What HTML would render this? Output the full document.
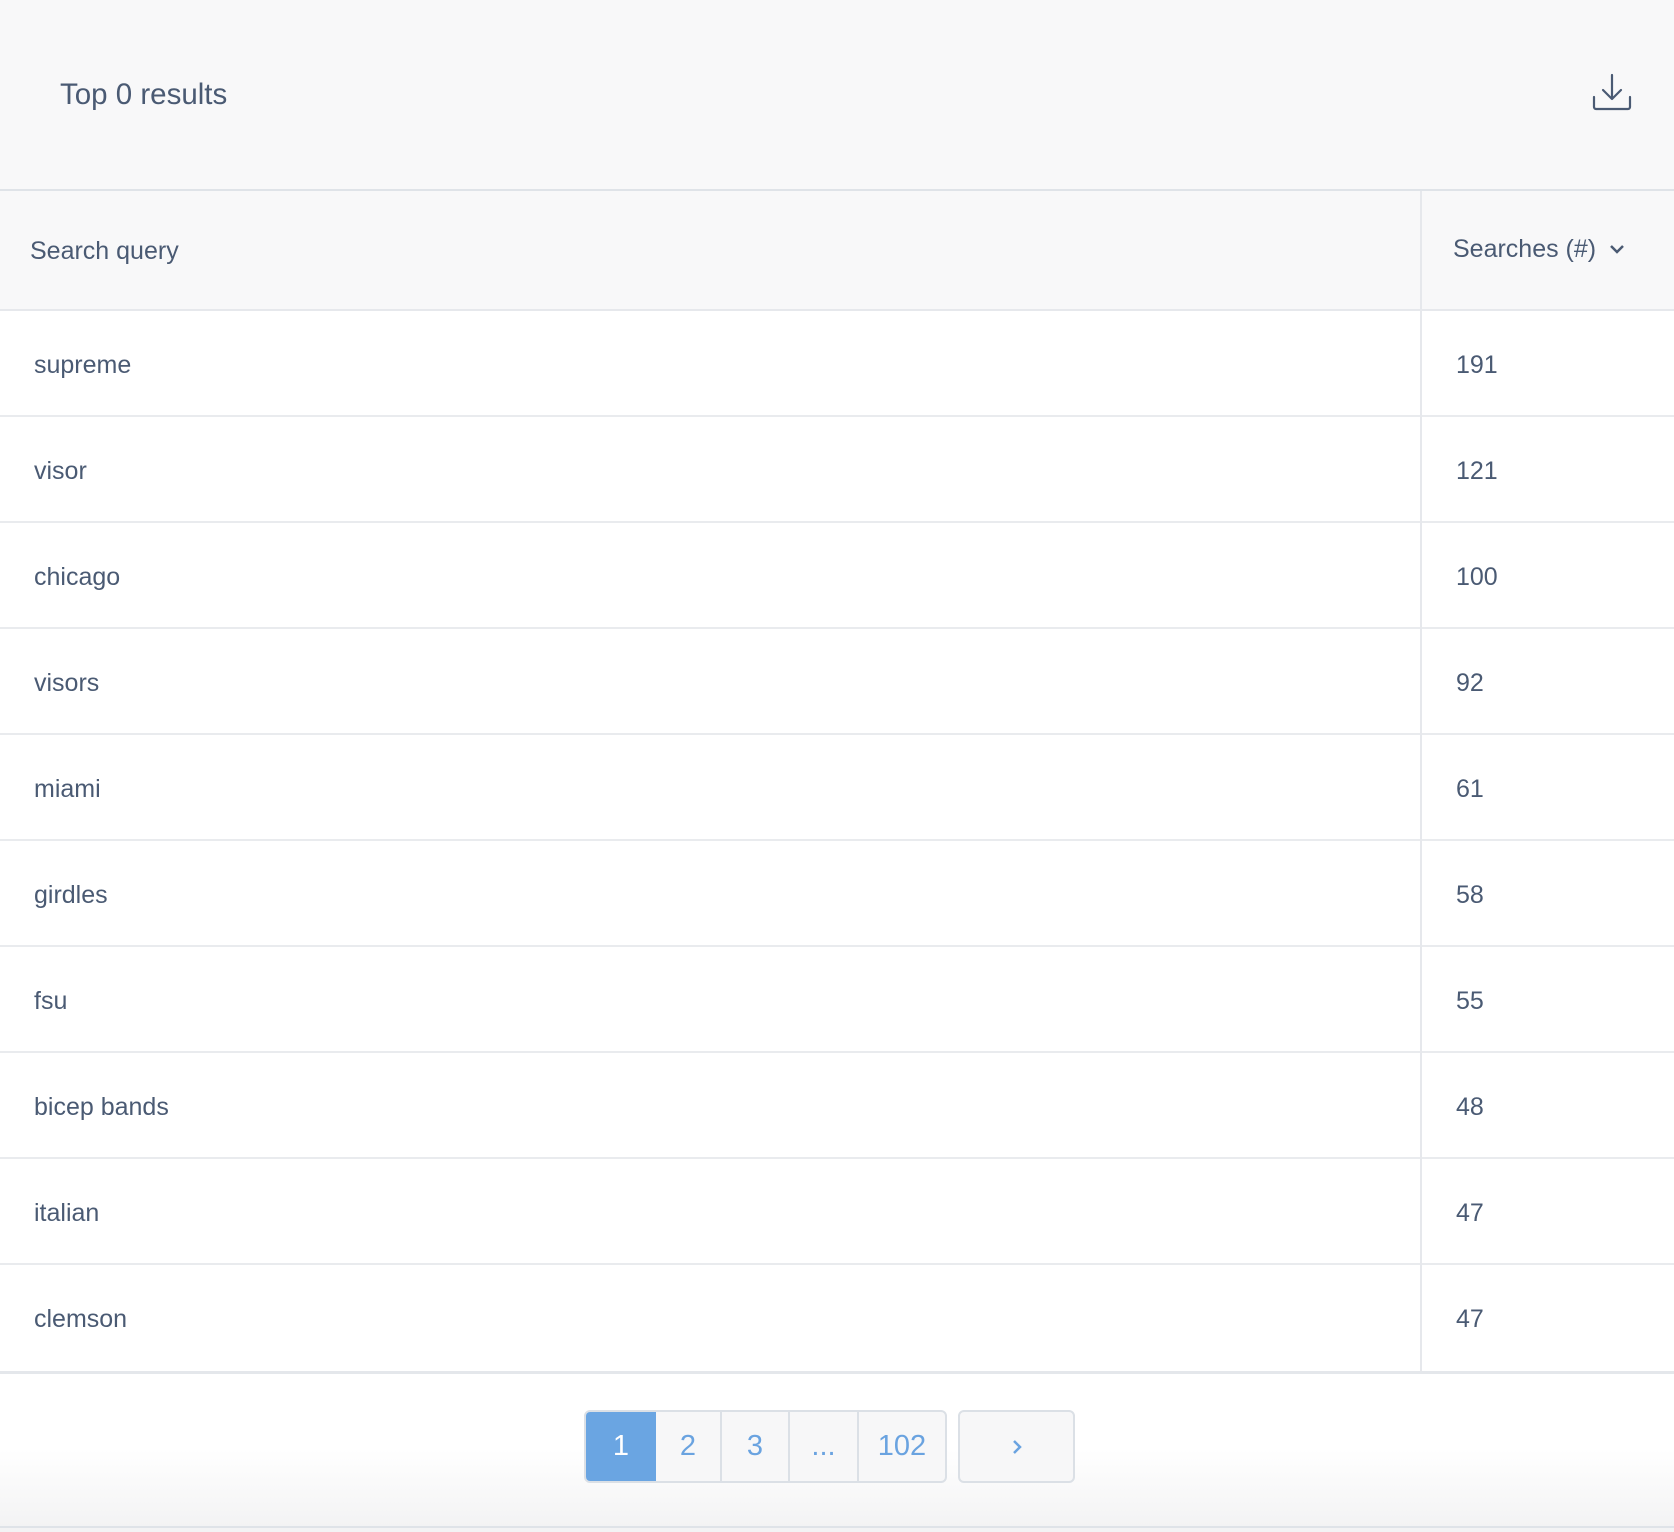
<!DOCTYPE html>
<html><head><meta charset="utf-8"><style>
*{box-sizing:border-box;margin:0;padding:0}
body{width:1674px;height:1532px;background:#f3f3f4;font-family:"Liberation Sans",sans-serif;color:#4a5a73;position:relative;overflow:hidden}
.hdr{position:absolute;left:0;top:0;width:1674px;height:191px;background:#f8f8f9;border-bottom:2px solid #dfe3e8}
.title{position:absolute;left:60px;top:78px;font-size:29.5px}
.dl{position:absolute;left:1592px;top:73px}
.th{position:absolute;left:0;top:191px;width:1674px;height:120px;background:#f8f8f9;border-bottom:2px solid #e6e8ec}
.th .a{position:absolute;left:30px;top:46px;font-size:25px}
.th .b{position:absolute;left:1453px;top:44px;font-size:25px}
.vl{position:absolute;left:1420px;top:191px;width:2px;height:1180px;background:#e6e8ec}
.row{position:absolute;left:0;width:1674px;height:106px;background:#fff;border-bottom:2px solid #e9ebee}
.row .a{position:absolute;left:34px;top:40px;font-size:25px}
.row .b{position:absolute;left:1456px;top:40px;font-size:25px}
.pg{position:absolute;left:0;top:1371px;width:1674px;height:157px;border-top:3px solid #e4e7eb;background:linear-gradient(#fff 0%,#fff 50%,#f3f3f4 100%);border-bottom:2px solid #dfe3e8}
.btns{position:absolute;left:584px;top:1410px;height:73px;display:flex;border:2px solid #dbe0e6;border-radius:6px;overflow:hidden;background:#f7f7f8}
.btns div{height:69px;line-height:69px;text-align:center;font-size:29px;color:#6aa3e0;border-right:2px solid #dbe0e6}
.btns div:last-child{border-right:none}
.btns .on{background:#6aa5e2;color:#fff;border-right:none}
.nx{position:absolute;left:958px;top:1410px;width:117px;height:73px;border:2px solid #dbe0e6;border-radius:6px;background:#f7f7f8}
</style></head><body>
<div class="hdr"><div class="title">Top 0 results</div>
<svg class="dl" width="40" height="40" viewBox="0 0 40 40" fill="none" stroke="#4a5a73" stroke-width="2.2" stroke-linecap="round" stroke-linejoin="round"><path d="M20 2V25M11 17l9 9 9-9"/><path d="M2 24v10a2 2 0 0 0 2 2h32a2 2 0 0 0 2-2V24"/></svg>
</div>
<div class="th"><div class="a">Search query</div><div class="b">Searches (#)</div>
<svg style="position:absolute;left:1609px;top:52px" width="16" height="12" viewBox="0 0 16 12" fill="none" stroke="#4a5a73" stroke-width="2.5"><path d="M2 3l6 6 6-6"/></svg></div>
<div class="row" style="top:311px"><div class="a">supreme</div><div class="b">191</div></div>
<div class="row" style="top:417px"><div class="a">visor</div><div class="b">121</div></div>
<div class="row" style="top:523px"><div class="a">chicago</div><div class="b">100</div></div>
<div class="row" style="top:629px"><div class="a">visors</div><div class="b">92</div></div>
<div class="row" style="top:735px"><div class="a">miami</div><div class="b">61</div></div>
<div class="row" style="top:841px"><div class="a">girdles</div><div class="b">58</div></div>
<div class="row" style="top:947px"><div class="a">fsu</div><div class="b">55</div></div>
<div class="row" style="top:1053px"><div class="a">bicep bands</div><div class="b">48</div></div>
<div class="row" style="top:1159px"><div class="a">italian</div><div class="b">47</div></div>
<div class="row" style="top:1265px;height:106px;border-bottom:none"><div class="a">clemson</div><div class="b">47</div></div>
<div class="vl"></div>
<div class="pg"></div>
<div class="btns"><div class="on" style="width:70px">1</div><div style="width:66px">2</div><div style="width:68px">3</div><div style="width:69px">...</div><div style="width:86px">102</div></div>
<div class="nx"><svg style="position:absolute;left:51px;top:27px" width="12" height="16" viewBox="0 0 12 16" fill="none" stroke="#6aa3e0" stroke-width="2.5"><path d="M3 2l6 6-6 6"/></svg></div>
</body></html>
